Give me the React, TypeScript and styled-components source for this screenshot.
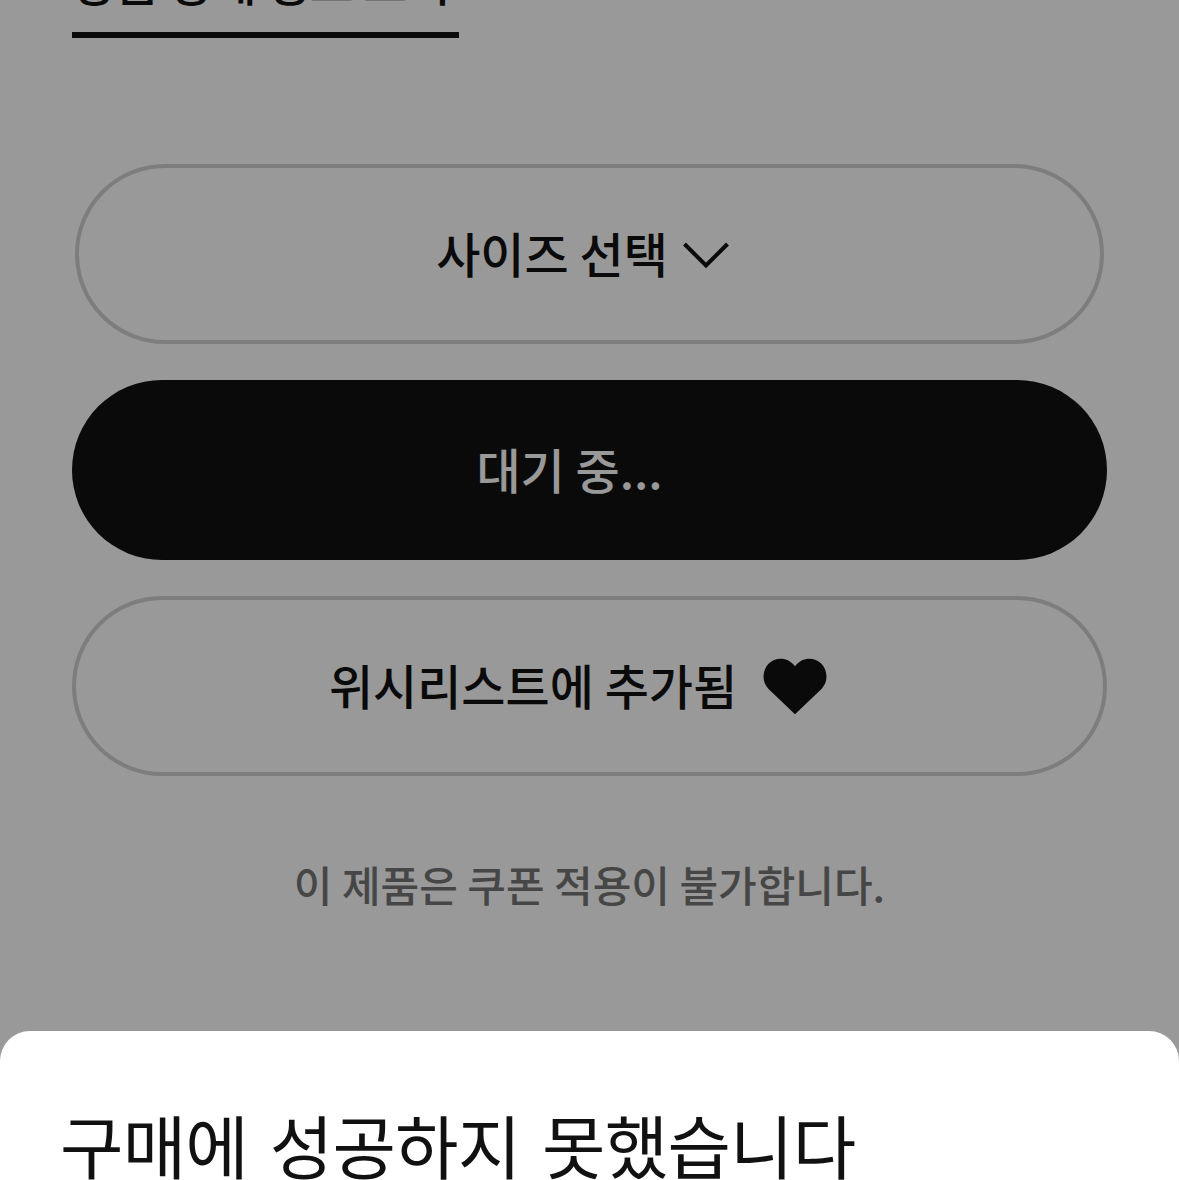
import React from "react";
import styled, { createGlobalStyle } from "styled-components";

const Global = createGlobalStyle`
  html, body { margin: 0; padding: 0; height: 1180px; overflow: hidden; background: #fff; }
  #root { height: 1180px; }
  * { box-sizing: border-box; }
`;
const font = `"Noto Sans CJK KR", "Noto Sans", sans-serif`;

const Page = styled.main`
  height: 1180px;
  overflow: hidden;
  padding: 0 72px;
  font-family: ${font};
  color: #111;
  display: flex;
  flex-direction: column;
  align-items: stretch;
`;
const TabRow = styled.div`
  display: flex;
  margin-top: -40px;
  margin-bottom: 126px;
`;
const Tab = styled.div`
  height: 78px;
  width: 387px;
  border-bottom: 6px solid #111;
  font-size: 48px;
  line-height: 40px;
  letter-spacing: -0.7px;
  font-weight: 500;
  white-space: nowrap;
`;
const Actions = styled.div`
  display: flex;
  flex-direction: column;
  gap: 36px;
  align-items: center;
`;
const Pill = styled.button<{ $inset?: boolean; $solid?: boolean; $shift: number }>`
  width: ${(p) => (p.$inset ? "1029px" : "1035px")};
  height: 180px;
  border-radius: 90px;
  border: ${(p) => (p.$solid ? "none" : "4px solid #d1d1d1")};
  background: ${(p) => (p.$solid ? "#111" : "transparent")};
  color: ${(p) => (p.$solid ? "#fff" : "#111")};
  font-family: ${font};
  font-size: 48px;
  font-weight: 500;
  display: flex;
  align-items: center;
  justify-content: center;
  padding: 0 ${(p) => p.$shift}px 0 0;
`;
const Label = styled.span`
  line-height: 60px;
  padding-bottom: 4px;
`;
const Chevron = styled.svg`
  width: 48px;
  height: 30px;
  margin-left: 15px;
`;
const Heart = styled.svg`
  width: 66px;
  height: 60px;
  margin: 2px 0 0 25px;
`;
const Note = styled.p`
  margin: 78px 0 0;
  text-align: center;
  font-size: 42px;
  line-height: 60px;
  font-weight: 500;
  color: #757575;
`;
const Overlay = styled.div`
  position: fixed;
  inset: 0;
  background: rgba(0, 0, 0, 0.4);
`;
const Sheet = styled.section`
  position: fixed;
  left: 0;
  right: 0;
  top: 1031px;
  height: 149px;
  overflow: hidden;
  background: #fff;
  border-radius: 30px 30px 0 0;
  padding: 65px 60px 0;
  font-family: ${font};
`;
const SheetTitle = styled.h2`
  margin: 0;
  font-size: 69px;
  line-height: 96px;
  letter-spacing: -0.8px;
  word-spacing: 7px;
  font-weight: 400;
  color: #111;
  white-space: nowrap;
`;

export default function App() {
  return (
    <>
      <Global />
      <Page>
        <TabRow>
          <Tab>상품 상세 정보 보기</Tab>
        </TabRow>
        <Actions>
          <Pill $inset $shift={12}>
            <Label>사이즈 선택</Label>
            <Chevron viewBox="0 0 48 30" fill="none" stroke="#111" strokeWidth="4">
              <path d="M1.5 5 L23 26.5 L44.5 5" />
            </Chevron>
          </Pill>
          <Pill $solid $shift={40}>
            <Label>대기 중...</Label>
          </Pill>
          <Pill $shift={22}>
            <Label>위시리스트에 추가됨</Label>
            <Heart viewBox="0 0 24 22" fill="#111">
              <path d="M12 21 L2.2 11.6 C-0.3 9 0 4.8 2.4 2.4 C5 -0.2 9.5 0 12 3.4 C14.5 0 19 -0.2 21.6 2.4 C24 4.8 24.3 9 21.8 11.6 Z" />
            </Heart>
          </Pill>
        </Actions>
        <Note>이 제품은 쿠폰 적용이 불가합니다.</Note>
      </Page>
      <Overlay />
      <Sheet>
        <SheetTitle>구매에 성공하지 못했습니다</SheetTitle>
      </Sheet>
    </>
  );
}
